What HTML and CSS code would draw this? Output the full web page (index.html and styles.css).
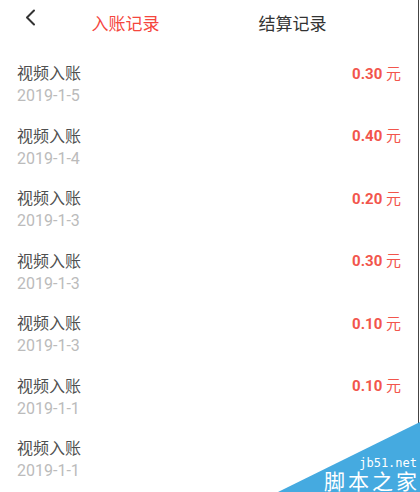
FILE: index.html
```html
<!DOCTYPE html>
<html lang="zh-CN">
<head>
<meta charset="utf-8">
<title>入账记录</title>
<link rel="stylesheet" href="styles.css">
</head>
<body>
<div class="page">
  <header class="header">
    <div class="back">
      <svg width="12" height="18" viewBox="0 0 12 18"><path d="M9 1.5 L2 8.5 L9 15.5" fill="none" stroke="#333" stroke-width="2" stroke-linecap="round" stroke-linejoin="round"/></svg>
    </div>
    <div class="tab active">入账记录</div>
    <div class="tab">结算记录</div>
  </header>
  <ul class="list">
    <li class="row"><div class="line"><span class="title">视频入账</span><span class="amount">0.30 <span class="unit">元</span></span></div><div class="date">2019-1-5</div></li>
    <li class="row"><div class="line"><span class="title">视频入账</span><span class="amount">0.40 <span class="unit">元</span></span></div><div class="date">2019-1-4</div></li>
    <li class="row"><div class="line"><span class="title">视频入账</span><span class="amount">0.20 <span class="unit">元</span></span></div><div class="date">2019-1-3</div></li>
    <li class="row"><div class="line"><span class="title">视频入账</span><span class="amount">0.30 <span class="unit">元</span></span></div><div class="date">2019-1-3</div></li>
    <li class="row"><div class="line"><span class="title">视频入账</span><span class="amount">0.10 <span class="unit">元</span></span></div><div class="date">2019-1-3</div></li>
    <li class="row"><div class="line"><span class="title">视频入账</span><span class="amount">0.10 <span class="unit">元</span></span></div><div class="date">2019-1-1</div></li>
    <li class="row"><div class="line"><span class="title">视频入账</span></div><div class="date">2019-1-1</div></li>
  </ul>
  <div class="edge"></div>
  <div class="wm-tri"></div>
  <div class="wm-text">
    <div class="wm-url">jb51.net</div>
    <div class="wm-name">脚本之家</div>
  </div>
</div>
</body>
</html>
```
FILE: styles.css
```css
html, body {
  margin: 0;
  padding: 0;
  background: #fff;
}
body {
  font-family: Roboto, "Noto Sans CJK SC", sans-serif;
  overflow: hidden;
}
.page {
  position: relative;
  width: 420px;
  height: 492px;
  overflow: hidden;
  background: #fff;
}
.header {
  display: grid;
  grid-template-columns: 42px 167px 167px;
  height: 54px;
}
.back {
  padding: 9px 0 0 25px;
}
.back svg {
  display: block;
}
.tab {
  font-size: 17px;
  line-height: 24px;
  padding-top: 12px;
  text-align: center;
  color: #333;
}
.tab.active {
  color: #f5463e;
}
.list {
  list-style: none;
  margin: 0;
  padding: 0;
}
.row {
  height: 62.5px;
  box-sizing: border-box;
  padding: 9.3px 19px 0 17px;
}
.line {
  display: flex;
  justify-content: space-between;
  align-items: center;
  height: 22px;
}
.title {
  font-size: 16px;
  line-height: 22px;
  color: #505050;
}
.amount {
  font-size: 15px;
  font-weight: bold;
  color: #f2554c;
  margin-top: -4px;
}
.unit {
  font-weight: normal;
  font-size: 15px;
}
.date {
  font-size: 16px;
  line-height: 22px;
  color: #bbb;
}
.edge {
  position: absolute;
  top: 0;
  right: 1px;
  width: 1px;
  height: 423px;
  background: #444;
}
.wm-tri {
  position: absolute;
  right: 0;
  bottom: 0;
  width: 142px;
  height: 70px;
  background: #45aae0;
  clip-path: polygon(100% 0, 100% 100%, 0 100%);
}
.wm-text {
  position: absolute;
  right: 3px;
  top: 457px;
  color: #fff;
  text-align: right;
  white-space: nowrap;
}
.wm-url {
  font-family: "DejaVu Sans Mono", monospace;
  font-size: 12px;
  line-height: 13px;
}
.wm-name {
  font-family: "Noto Sans CJK SC", sans-serif;
  font-size: 21px;
  line-height: 21px;
  letter-spacing: 3px;
  margin-right: -3px;
}
```
